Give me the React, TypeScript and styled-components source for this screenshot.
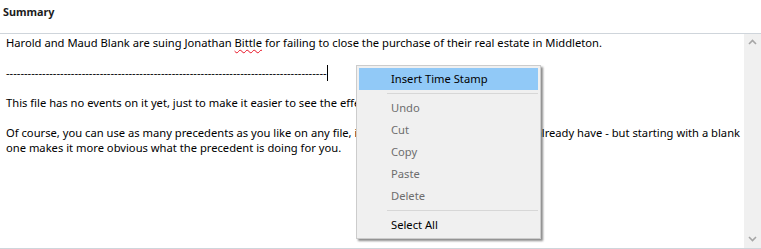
import React from "react";
import styled, { createGlobalStyle } from "styled-components";

const GlobalStyle = createGlobalStyle`
  html, body {
    margin: 0;
    padding: 0;
    background: #ffffff;
  }

  body {
    font-family: "Noto Sans", "Open Sans", sans-serif;
    font-size: 11.2px;
    color: #000000;
  }
`;

const Page = styled.div`
  width: 761px;
  height: 249px;
  position: relative;
  overflow: hidden;
  display: flex;
  flex-direction: column;
`;

const Title = styled.div`
  height: 33px;
  padding: 4px 0 0 3px;
  box-sizing: border-box;
  font-weight: 700;
  font-size: 10.8px;
  line-height: 16px;
  color: #1b1b1b;
`;

const Editor = styled.div`
  height: 214px;
  display: flex;
  border-top: 1px solid #cfd5db;
  border-bottom: 1px solid #cfd5db;
`;

const TextArea = styled.div`
  flex: 1;
  padding: 1px 4px 0 6px;
  line-height: 15px;
  white-space: nowrap;
  overflow: hidden;
`;

const Line = styled.div`
  height: 15px;
`;

const Misspelled = styled.span`
  text-decoration: underline wavy #e81123;
  text-decoration-thickness: 1px;
  text-underline-offset: 2px;
`;

const Caret = styled.span`
  display: inline-block;
  width: 1px;
  height: 16px;
  background: #000;
  vertical-align: -4px;
`;

const Scrollbar = styled.div`
  width: 17px;
  background: #f0f0f0;
  display: flex;
  flex-direction: column;
  justify-content: space-between;
  align-items: center;
  padding: 5px 0 6px;
`;

const Arrow = styled.svg`
  width: 9px;
  height: 6px;
`;

const Menu = styled.div`
  position: absolute;
  left: 356px;
  top: 65px;
  width: 185px;
  box-sizing: border-box;
  padding: 2px;
  background: #f0f0f0;
  border: 1px solid #cccccc;
  box-shadow: 2px 2px 2px rgba(0, 0, 0, 0.45);
`;

const Item = styled.div<{ $active?: boolean; $disabled?: boolean }>`
  height: 22px;
  line-height: 22px;
  padding-left: 32px;
  background: ${(p) => (p.$active ? "#91c9f7" : "transparent")};
  color: ${(p) => (p.$disabled ? "#6d6d6d" : "#000000")};
`;

const Separator = styled.div`
  height: 1px;
  margin: 3px 0 3px 28px;
  background: #d7d7d7;
`;

const App: React.FC = () => {
  return (
    <Page>
      <GlobalStyle />
      <Title>Summary</Title>
      <Editor>
        <TextArea>
          <Line>
            Harold and Maud Blank are suing Jonathan <Misspelled>Bittle</Misspelled> for
            failing to close the purchase of their real estate in Middleton.
          </Line>
          <Line />
          <Line>
            {"-".repeat(89)}
            <Caret />
          </Line>
          <Line />
          <Line>
            This file has no events on it yet, just to make it easier to see the effect
            of adding a precedent.
          </Line>
          <Line />
          <Line>
            Of course, you can use as many precedents as you like on any file, including
            files with the events you already have - but starting with a blank
          </Line>
          <Line>one makes it more obvious what the precedent is doing for you.</Line>
        </TextArea>
        <Scrollbar>
          <Arrow viewBox="0 0 9 6">
            <path d="M1 5 L4.5 1.5 L8 5" fill="none" stroke="#a6a6a6" strokeWidth="1.6" />
          </Arrow>
          <Arrow viewBox="0 0 9 6">
            <path d="M1 1 L4.5 4.5 L8 1" fill="none" stroke="#a6a6a6" strokeWidth="1.6" />
          </Arrow>
        </Scrollbar>
      </Editor>

      <Menu>
        <Item $active>Insert Time Stamp</Item>
        <Separator />
        <Item $disabled>Undo</Item>
        <Item $disabled>Cut</Item>
        <Item $disabled>Copy</Item>
        <Item $disabled>Paste</Item>
        <Item $disabled>Delete</Item>
        <Separator />
        <Item>Select All</Item>
      </Menu>
    </Page>
  );
};

export default App;
